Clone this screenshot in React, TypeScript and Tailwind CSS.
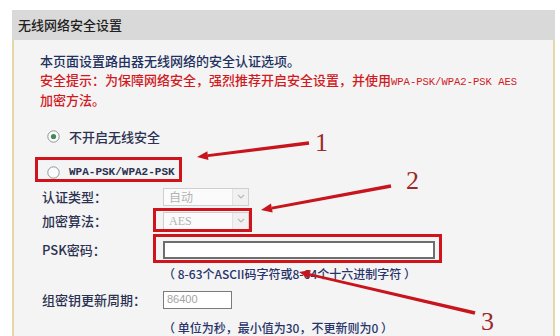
import React from 'react';

const cn = '"Noto Sans CJK SC", "Noto Sans", sans-serif';
const mono = '"Liberation Mono", "DejaVu Sans Mono", monospace';

const Radio = ({ checked }: { checked?: boolean }) => (
  <svg width="13" height="13" viewBox="0 0 13 13" className="shrink-0">
    <circle cx="6.5" cy="6.5" r="5.7" fill="#fbfbfb" stroke="#8c969c" strokeWidth="1" />
    {checked && <circle cx="6.5" cy="6.5" r="2.6" fill="#3f8a55" />}
  </svg>
);

const Select = ({ value }: { value: string }) => (
  <div className="flex items-center w-[86px] h-[18px] border border-[#cfcfcf] bg-[#fbfbfb]">
    <span className="flex-1 pl-[5px] text-[12px] leading-none text-[#b3b3b3]" style={{ fontFamily: value === 'AES' ? '"Liberation Serif", serif' : cn }}>
      {value}
    </span>
    <div className="w-[16px] h-full flex items-center justify-center bg-[#f1f1f1] border-l border-[#e2e2e2]">
      <svg width="8" height="5" viewBox="0 0 8 5">
        <path d="M1 1 L4 4 L7 1" fill="none" stroke="#b9b9b9" strokeWidth="1.2" />
      </svg>
    </div>
  </div>
);

const Label = ({ children }: { children: React.ReactNode }) => (
  <div className="w-[121px] shrink-0 text-[13px] font-medium leading-none text-[#2b3150]" style={{ fontFamily: cn }}>
    {children}
  </div>
);

const Arrow = ({ x1, y1, x2, y2 }: { x1: number; y1: number; x2: number; y2: number }) => {
  const dx = x2 - x1;
  const dy = y2 - y1;
  const len = Math.hypot(dx, dy);
  const ux = dx / len;
  const uy = dy / len;
  const px = -uy;
  const py = ux;
  const bx = x2 - ux * 11;
  const by = y2 - uy * 11;
  const head = `${x2},${y2} ${bx + px * 4.5},${by + py * 4.5} ${bx - px * 4.5},${by - py * 4.5}`;
  const body = `${x1 + px * 1.8},${y1 + py * 1.8} ${bx + px * 1.4},${by + py * 1.4} ${bx - px * 1.4},${by - py * 1.4} ${x1 - px * 1.8},${y1 - py * 1.8}`;
  return (
    <g fill="#c8141c">
      <polygon points={body} />
      <polygon points={head} />
    </g>
  );
};

export default function App() {
  return (
    <div className="relative w-[560px] h-[336px] bg-white overflow-hidden">
      <div className="ml-[12px] pt-[10px] w-[543px]">
        <div className="h-[30px] bg-[#d9d9d9] flex items-center pl-[6px] text-[13px] font-medium text-[#1f1f1f]" style={{ fontFamily: cn }}>
          无线网络安全设置
        </div>
        <div className="h-[296px] bg-[#f4f4f4] border-l-2 border-r-2 border-[#e7d7a6] pl-[26px] pt-[12px]">
          <div className="text-[13px] font-medium leading-[18.5px]" style={{ fontFamily: cn }}>
            <div className="text-[#22305e]">本页面设置路由器无线网络的安全认证选项。</div>
            <div className="text-[#d01a1f]">
              安全提示：为保障网络安全，强烈推荐开启安全设置，并使用
              <span className="text-[10.5px]" style={{ fontFamily: mono }}>WPA-PSK/WPA2-PSK AES</span>
            </div>
            <div className="text-[#d01a1f]">加密方法。</div>
          </div>

          <div className="mt-[17px] ml-[7px] h-[20px] flex items-center gap-[9px]">
            <Radio checked />
            <span className="text-[13px] font-medium text-[#2b3150]" style={{ fontFamily: cn }}>不开启无线安全</span>
          </div>
          <div className="mt-[16px] ml-[7px] h-[20px] flex items-center gap-[9px]">
            <Radio />
            <span className="text-[11px] font-bold text-[#2b3150]" style={{ fontFamily: mono }}>WPA-PSK/WPA2-PSK</span>
          </div>

          <div className="mt-[5px] flex items-center h-[18px] ml-[2px]">
            <Label>认证类型：</Label>
            <Select value="自动" />
          </div>
          <div className="mt-[6px] flex items-center h-[18px] ml-[2px]">
            <Label>加密算法：</Label>
            <Select value="AES" />
          </div>
          <div className="mt-[11px] flex items-center h-[18px] ml-[2px]">
            <Label>PSK密码：</Label>
            <div className="w-[272px] h-[18px] border-2 border-[#6e6e6e] bg-white" />
          </div>
          <div className="mt-[8px] ml-[123px] text-[12px] font-medium leading-[14px] text-[#27336a]" style={{ fontFamily: cn }}>
            （ 8-63个ASCII码字符或8-64个十六进制字符 ）
          </div>
          <div className="mt-[10px] flex items-center h-[18px] ml-[2px]">
            <Label>组密钥更新周期：</Label>
            <div className="w-[69px] h-[18px] border border-[#7b7b7b] bg-white flex items-center pl-[3px] text-[11px] text-[#a3a3a3]" style={{ fontFamily: '"Liberation Sans", sans-serif' }}>
              86400
            </div>
          </div>
          <div className="mt-[12px] ml-[123px] text-[12px] font-medium leading-[14px] text-[#27336a]" style={{ fontFamily: cn }}>
            （ 单位为秒，最小值为30，不更新则为0 ）
          </div>
        </div>
      </div>

      {/* annotations */}
      <svg className="absolute inset-0 pointer-events-none" width="560" height="336" viewBox="0 0 560 336">
        <g fill="none" stroke="#d0141c" strokeWidth="3">
          <rect x="36.5" y="158.5" width="144" height="22" />
          <rect x="154.5" y="209.5" width="96" height="21" />
          <rect x="154.5" y="235.5" width="286" height="26" />
        </g>
        <Arrow x1={309} y1={143} x2={197} y2={157} />
        <Arrow x1={391} y1={186} x2={261} y2={210} />
        <Arrow x1={475} y1={313} x2={299} y2={272} />
        <g fill="#9a2a2a" fontFamily='"Liberation Serif", serif' fontSize="26">
          <text x="315" y="151">1</text>
          <text x="406" y="189">2</text>
          <text x="481" y="330">3</text>
        </g>
      </svg>
    </div>
  );
}
